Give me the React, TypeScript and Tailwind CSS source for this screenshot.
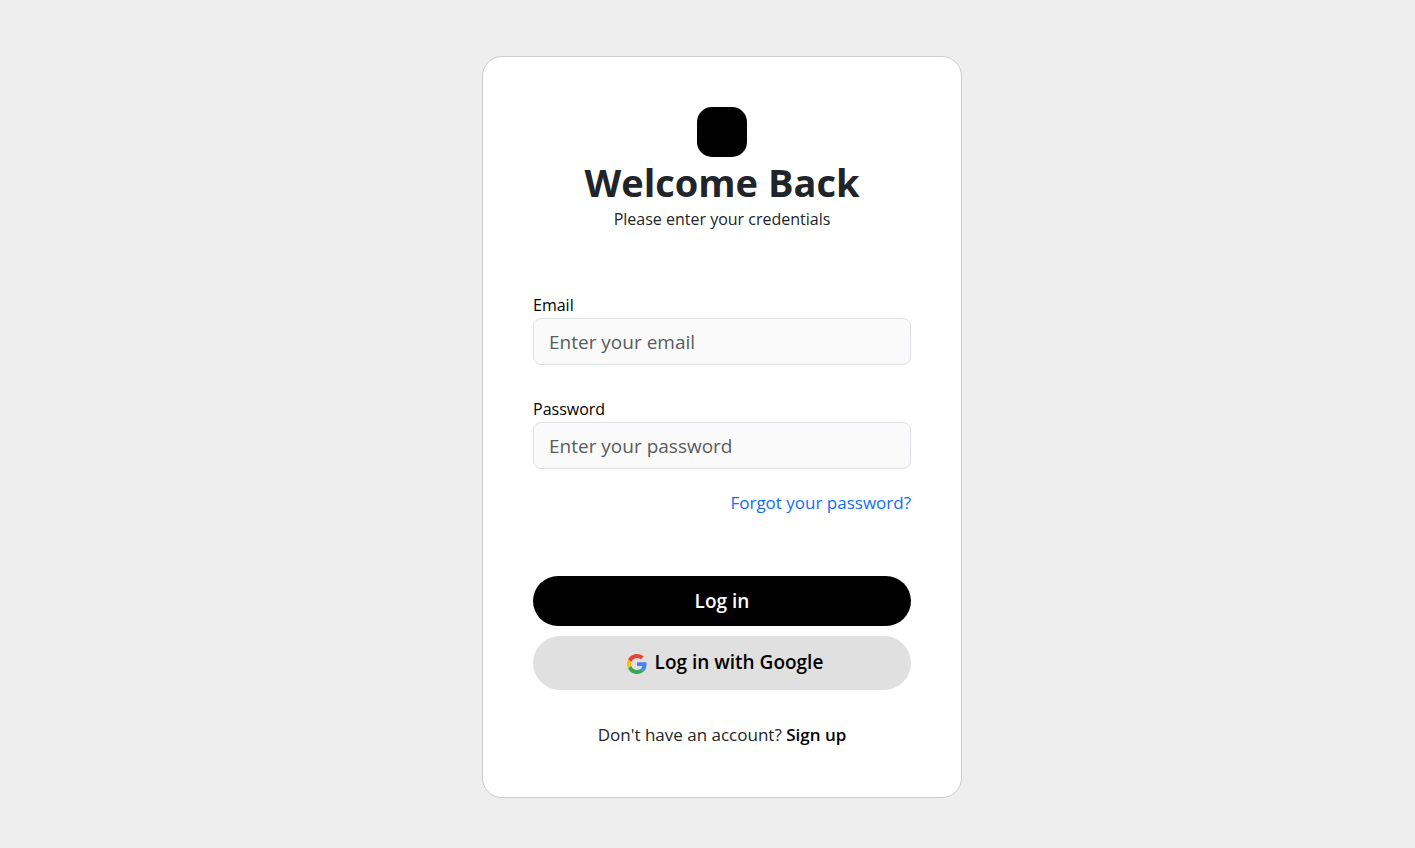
function GoogleIcon() {
  return (
    <svg viewBox="0 0 48 48" className="mt-1 size-5 shrink-0" aria-hidden="true">
      <path fill="#EA4335" d="M24 9.5c3.54 0 6.71 1.22 9.21 3.6l6.85-6.85C35.9 2.38 30.47 0 24 0 14.62 0 6.51 5.38 2.56 13.22l7.98 6.19C12.43 13.72 17.74 9.5 24 9.5z" />
      <path fill="#4285F4" d="M46.98 24.55c0-1.57-.15-3.09-.38-4.55H24v9.02h12.94c-.58 2.96-2.26 5.48-4.78 7.18l7.73 6c4.51-4.18 7.09-10.36 7.09-17.65z" />
      <path fill="#FBBC05" d="M10.53 28.59c-.48-1.45-.76-2.99-.76-4.59s.27-3.14.76-4.59l-7.98-6.19C.92 16.46 0 20.12 0 24c0 3.88.92 7.54 2.56 10.78l7.97-6.19z" />
      <path fill="#34A853" d="M24 48c6.48 0 11.93-2.13 15.89-5.81l-7.73-6c-2.15 1.45-4.92 2.3-8.16 2.3-6.26 0-11.57-4.22-13.47-9.91l-7.98 6.19C6.51 42.62 14.62 48 24 48z" />
    </svg>
  );
}

type FieldProps = { id: string; label: string; type: string; placeholder: string };

function Field({ id, label, type, placeholder }: FieldProps) {
  return (
    <div className="flex flex-col">
      <label htmlFor={id} className="text-base leading-[26px]">
        {label}
      </label>
      <input
        id={id}
        type={type}
        placeholder={placeholder}
        className="w-full rounded-lg border border-[#dee2e6] bg-[#fafafa] px-[15px] pt-2.5 pb-2 text-[19px] leading-[27px] placeholder:text-[#595c5f]"
      />
    </div>
  );
}

export default function App() {
  return (
    <main className="flex min-h-screen items-center justify-center bg-[#eeeeee] pt-1.5 pl-[29px] font-['Open_Sans','Noto_Sans',sans-serif] text-[#212529]">
      <section className="w-full max-w-[480px] rounded-[20px] border border-[#cccccc] bg-white p-[50px]">
        <header className="flex flex-col items-center text-center">
          <div className="size-[50px] rounded-[15px] bg-black" />
          <h1 className="text-[38px] leading-[50px] font-bold">Welcome Back</h1>
          <p className="text-base leading-6">Please enter your credentials</p>
        </header>

        <form className="mt-[61px]" onSubmit={(e) => e.preventDefault()}>
          <div className="flex flex-col gap-[31px] text-black">
            <Field id="email" label="Email" type="email" placeholder="Enter your email" />
            <Field id="password" label="Password" type="password" placeholder="Enter your password" />
          </div>
          <div className="mt-[21px] text-right text-[17px] leading-[26px]">
            <a href="#forgot" className="text-[#0d6efd]">
              Forgot your password?
            </a>
          </div>
          <div className="mt-[60px] flex flex-col gap-2.5 text-[19px] font-semibold">
            <button type="submit" className="h-[50px] rounded-full bg-black text-white">
              Log in
            </button>
            <button
              type="button"
              className="flex h-[54px] items-center justify-center gap-2 rounded-full bg-[#e0e0e0] pb-0.5 pl-1.5 text-black"
            >
              <GoogleIcon />
              Log in with Google
            </button>
          </div>
        </form>

        <p className="mt-8 text-center text-[17px] leading-[25px]">
          Don't have an account?{" "}
          <a href="#signup" className="font-semibold text-black">
            Sign up
          </a>
        </p>
      </section>
    </main>
  );
}
